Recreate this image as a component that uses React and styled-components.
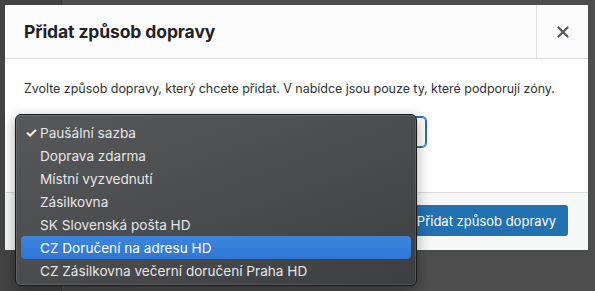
import React from 'react'
import styled, { createGlobalStyle } from 'styled-components'

const GlobalStyle = createGlobalStyle`
html, body {
    margin:0;
    padding:0;
}
body {
    font-family: Inter, "Noto Sans", "Liberation Sans", sans-serif;
}
`;

const Page = styled.div`
position:relative;
width:595px;
height:291px;
overflow:hidden;
background: linear-gradient(to right, #434343 0 61px, #3a3a3a 61px 62px, #4d4d4d 62px);
padding:5px 0 0 5px;
box-sizing:border-box;
`;

const Modal = styled.div`
width:583px;
height:245px;
background:#fff;
display:flex;
flex-direction:column;
`;

const Header = styled.div`
height:53px;
display:flex;
align-items:stretch;
background:#fcfcfc;
border-bottom:1px solid #dcdcde;
`;

const Title = styled.h1`
flex:1;
margin:0;
padding-left:19px;
display:flex;
align-items:center;
font-size:17.5px;
font-weight:700;
color:#1d2327;
letter-spacing:-0.1px;
`;

const CloseButton = styled.button`
width:52px;
border:none;
border-left:1px solid #dcdcde;
background:transparent;
display:flex;
align-items:center;
justify-content:center;
padding:0;
cursor:pointer;
color:#50575e;
`;

const Body = styled.div`
flex:1;
padding:21px 15px 0 15px;
`;

const Text = styled.p`
margin:0 0 0 4px;
font-size:12.5px;
letter-spacing:-0.04px;
line-height:18px;
white-space:nowrap;
color:#2c3338;
`;

const Select = styled.div`
margin-top:19px;
width:406px;
height:30px;
box-sizing:border-box;
border:1px solid #2271b1;
box-shadow:0 0 0 1px #2271b1;
border-radius:4px;
`;

const Footer = styled.div`
height:58px;
box-sizing:border-box;
border-top:1px solid #dcdcde;
background:#f6f7f7;
display:flex;
align-items:center;
justify-content:flex-end;
padding:0 20px 2px 0;
`;

const Button = styled.button`
height:31px;
padding:0 12px;
border:none;
border-radius:3px;
background:#2271b1;
color:#fff;
font-family:inherit;
font-size:13px;
cursor:pointer;
`;

const Menu = styled.div`
position:absolute;
left:15px;
top:114px;
width:402px;
height:172px;
box-sizing:border-box;
padding:6px 5px;
border-radius:6px;
border:1px solid #1a1a1a;
background:linear-gradient(160deg, #56585a 0%, #4a4c4e 50%, #3d3e40 100%);
box-shadow:inset 0 0 0 1px rgba(255,255,255,0.12), 0 4px 14px rgba(0,0,0,0.35);
`;

const Item = styled.div`
height:23px;
display:flex;
align-items:center;
padding-left:4px;
border-radius:4px;
font-size:13.6px;
background:${props => props.active ? 'linear-gradient(#3c84dc, #2f77d6)' : 'transparent'};
color:${props => props.active ? '#fff' : '#e6e6e6'};
`;

const Check = styled.span`
width:15px;
font-size:14px;
font-weight:700;
color:#f0f0f0;
`;

const options = [
    'Paušální sazba',
    'Doprava zdarma',
    'Místní vyzvednutí',
    'Zásilkovna',
    'SK Slovenská pošta HD',
    'CZ Doručení na adresu HD',
    'CZ Zásilkovna večerní doručení Praha HD',
];

const App = () => {
    return (
        <Page>
            <GlobalStyle/>
            <Modal>
                <Header>
                    <Title>Přidat způsob dopravy</Title>
                    <CloseButton aria-label="Zavřít">
                        <svg width="12" height="12" viewBox="0 0 12 12">
                            <path d="M1.5 1.5 L10.5 10.5 M10.5 1.5 L1.5 10.5" stroke="currentColor" strokeWidth="2.2" strokeLinecap="round"/>
                        </svg>
                    </CloseButton>
                </Header>
                <Body>
                    <Text>Zvolte způsob dopravy, který chcete přidat. V nabídce jsou pouze ty, které podporují zóny.</Text>
                    <Select/>
                </Body>
                <Footer>
                    <Button>Přidat způsob dopravy</Button>
                </Footer>
            </Modal>
            <Menu>
                {options.map((o, i) => (
                    <Item key={o} active={i === 5}>
                        <Check>{i === 0 ? '✓' : ''}</Check>
                        {o}
                    </Item>
                ))}
            </Menu>
        </Page>
    )
}

export default App
